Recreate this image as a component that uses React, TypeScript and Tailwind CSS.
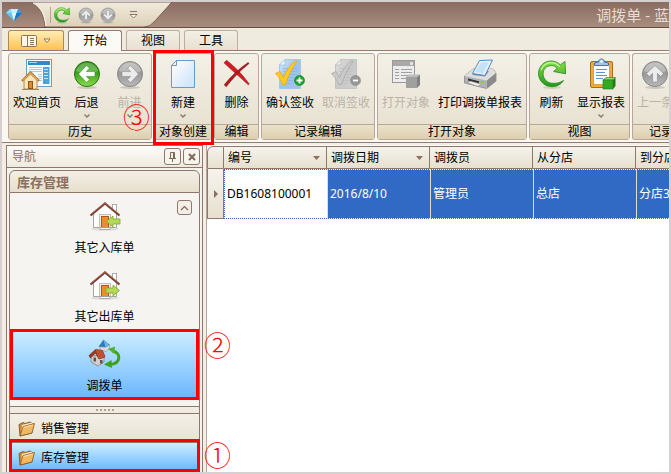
import { useState, type ReactNode } from "react";
import clsx from "clsx";

function Gem() {
  return (
    <svg width="16" height="12" viewBox="0 0 16 12">
      <path d="M4 0h8l4 4-8 8-8-8z" fill="#2f9be8" />
      <path d="M4 0h8l-1.500 4h-5z" fill="#c9efff" />
      <path d="M0 4h5.500L8 12z" fill="#62c4f5" />
      <path d="M5.500 4h5L8 12z" fill="#e4f8ff" />
      <path d="M10.500 4H16l-8 8z" fill="#1678c8" />
      <path d="M4 0l1.500 4H0z" fill="#8bdcfb" />
    </svg>
  );
}

function Refresh({ size = 32 }: { size?: number }) {
  return (
    <svg width={size} height={size} viewBox="0 0 32 32">
      <defs>
        <linearGradient id="refreshFill" x1="0" y1="0" x2="0" y2="1">
          <stop offset="0" stopColor="#8be04a" />
          <stop offset="1" stopColor="#1f9a17" />
        </linearGradient>
      </defs>
      <ellipse cx="16" cy="29.500" rx="9" ry="1.500" fill="#00000020" />
      <path
        d="M27.500 22.500C25 26.800 20 29.200 14.500 28.600 7.500 27.800 2.500 22 2.500 15.500 2.500 8.500 8 3 15 3c3.800 0 7 1.400 9.300 3.900L29 3.500l.6 12.300-12-2.300 3.600-3.200C19.500 8.300 17.500 7.500 15 7.600c-4.600.1-7.900 3.600-7.900 8 0 5.500 4 9.300 8.900 9.700 4.500.3 8-.6 11.500-2.800z"
        fill="url(#refreshFill)"
        stroke="#1f8a19"
        strokeWidth=".8"
      />
      <path d="M5 12C7 7 11 4.600 15.500 4.700c3.500.1 6 1.500 8.300 4" fill="none" stroke="#c7f59c" strokeWidth="1.200" />
    </svg>
  );
}

function RoundArrow({ dir, tone, size = 32 }: { dir: "left" | "right" | "up" | "down"; tone: "green" | "gray"; size?: number }) {
  const angle = { left: 0, up: 90, right: 180, down: 270 }[dir];
  const green = tone === "green";
  const id = `round-${tone}`;
  return (
    <svg width={size} height={size} viewBox="0 0 32 32">
      <defs>
        <linearGradient id={id} x1="0" y1="0" x2="0" y2="1">
          <stop offset="0" stopColor={green ? "#2f8f16" : "#b4b4b4"} />
          <stop offset="0.5" stopColor={green ? "#3fa51e" : "#9a9a9a"} />
          <stop offset="1" stopColor={green ? "#8ede4c" : "#b9b9b9"} />
        </linearGradient>
      </defs>
      <ellipse cx="16" cy="29.500" rx="10" ry="1.500" fill="#00000025" />
      <circle cx="16" cy="16" r="12.500" fill={`url(#${id})`} stroke={green ? "#25750f" : "#878787"} />
      <path d="M5 13a11.500 11.500 0 0 1 22 0c-6 3-16 3-22 0z" fill="#ffffff" opacity=".25" />
      <g transform={`rotate(${angle} 16 16)`}>
        <path d="M7.500 16l8-8.500 3 2.800-3.200 3.300H24v4.800h-8.700l3.200 3.300-3 2.800z" fill={green ? "#fff" : "#ececec"} stroke={green ? "#3a8f20" : "#8b8b8b"} strokeWidth=".6" />
      </g>
    </svg>
  );
}

function WelcomeIcon() {
  return (
    <svg width="32" height="32" viewBox="0 0 32 32">
      <rect x="5.500" y="1.500" width="25" height="27" fill="#f6fbff" stroke="#6b9fc4" />
      <rect x="7" y="3" width="22" height="4" fill="#2a8cc8" />
      <rect x="8" y="4" width="8" height="1" fill="#9fd5f2" />
      <path d="M8 9.500h13M8 11.500h13M8 13.500h13M17 16.500h4M17 18.500h4M17 20.500h4M17 22.500h4" stroke="#a8cce4" />
      <rect x="22" y="9" width="6.500" height="17" fill="#4ba3d8" />
      <path d="M23 11.500h4M23 14.500h4M23 17.500h4M23 20.500h4" stroke="#c6e5f7" />
      <path d="M3 22v9h13v-9l-6.500-6z" fill="#fbe6b8" stroke="#a8732e" strokeWidth=".8" />
      <path d="M1 23l8.500-8.500L18 23" fill="none" stroke="#b07a38" strokeWidth="2.400" />
      <path d="M2 22.300l7.500-7.300 7.500 7.300" fill="none" stroke="#f3c67c" />
      <rect x="7.500" y="23.500" width="4" height="7" fill="#d88c35" stroke="#8f5720" />
      <path d="M1 31.500h17" stroke="#9c8468" />
    </svg>
  );
}

function NewIcon() {
  return (
    <svg width="32" height="32" viewBox="0 0 32 32">
      <defs>
        <linearGradient id="paper" x1="0" y1="0" x2="1" y2="1">
          <stop offset="0" stopColor="#ffffff" />
          <stop offset="1" stopColor="#c9e2fa" />
        </linearGradient>
      </defs>
      <path d="M9.500 2.500h18v27h-23v-22z" fill="url(#paper)" stroke="#6b9bcb" />
      <path d="M9.500 2.500v5h-5z" fill="#e9f4ff" stroke="#6b9bcb" />
    </svg>
  );
}

function DeleteIcon() {
  return (
    <svg width="32" height="32" viewBox="0 0 32 32">
      <path d="M3 4.800L5.500 2.300C13 8 20.500 15.500 28.300 26l-1 .8C20 20 11 12.500 3 4.800z" fill="#d31c22" stroke="#9b1a1e" strokeWidth=".6" />
      <path d="M28 5.500l-.8-1C19 10 10.500 17.500 3.200 26.800l2 1.900C11.500 20.500 19 12.800 28 5.500z" fill="#b3181d" stroke="#8d1015" strokeWidth=".6" />
    </svg>
  );
}

function SignIcon({ off = false }: { off?: boolean }) {
  const id = off ? "sheetOff" : "sheetOn";
  return (
    <svg width="32" height="32" viewBox="0 0 32 32">
      <defs>
        <linearGradient id={id} x1="0" y1="0" x2="1" y2="1">
          <stop offset="0" stopColor={off ? "#dedede" : "#cfe9f8"} />
          <stop offset="0.5" stopColor={off ? "#c9c9c9" : "#9cc4ea"} />
          <stop offset="1" stopColor={off ? "#cecece" : "#a9bdf2"} />
        </linearGradient>
      </defs>
      <path d="M11 1.500h15.500v29h-21V7z" fill={`url(#${id})`} stroke={off ? "#bcbcbc" : "#9cc3ea"} strokeWidth=".8" />
      <path d="M11 1.500V7H5.500z" fill={off ? "#ececec" : "#eef9ff"} stroke={off ? "#b0b0b0" : "#86b3dc"} strokeWidth=".6" />
      <path d="M9 10.500h14M9 13.500h14M9 16.500h14M9 19.500h11M9 22.500h10M9 25.500h9" stroke={off ? "#bebebe" : "#8ab4e0"} strokeWidth=".7" />
      <path
        d="M1.500 15.500l4.500-2 3.500 6.500C12 12.500 16 7 21.500 2.500l1.500.8C18 10.500 14.500 17 11.500 26.500H8.500C7 22 4.500 18.500 1.500 15.500z"
        fill={off ? "#cacaca" : "#ffcb22"}
        stroke={off ? "#a9a9a9" : "#e8a51a"}
        strokeWidth=".8"
      />
      <circle cx="25.500" cy="22.500" r="5" fill={off ? "#989898" : "#19a52b"} stroke={off ? "#858585" : "#0d7a1b"} strokeWidth=".6" />
      <path d={off ? "M23 22.500h5" : "M22.500 22.500h6M25.500 19.500v6"} stroke="#fff" strokeWidth="1.800" />
    </svg>
  );
}

function OpenObjectIcon() {
  return (
    <svg width="32" height="32" viewBox="0 0 32 32">
      <rect x="2.500" y="2.500" width="22" height="22" fill="#ececec" stroke="#999" />
      <rect x="3" y="3" width="21" height="5" fill="#a9a9a9" />
      <rect x="20" y="4" width="3" height="3" fill="#e0e0e0" />
      <path d="M5 11.500h4M11 11.500h11M5 14.500h4M11 14.500h11M5 17.500h4M11 17.500h8M5 20.500h4M11 20.500h5" stroke="#a0a0a0" />
      <path d="M16 19l3-2.500h11L27 19z" fill="#bdbdbd" />
      <path d="M27 19l3-2.500V27l-3 3z" fill="#818181" />
      <rect x="16" y="19" width="11" height="11" fill="#a0a0a0" />
    </svg>
  );
}

function PrinterIcon() {
  return (
    <svg width="34" height="32" viewBox="0 0 34 32">
      <path d="M1.500 18L10 11h20l3 4v8l-9.500 7.500L1.500 25z" fill="#b2b2b2" stroke="#8a8a8a" strokeWidth=".8" />
      <path d="M1.500 18L10 11h20l3 4-9 7.500z" fill="#dedede" />
      <path d="M24 22.500l9-7.500v8l-9 7.500z" fill="#8b8b8b" />
      <path d="M9 17l5-4h12l-4 5.500z" fill="#8f8f8f" />
      <path d="M16.500 2.500L29.500 2 22 17.500l-12.500-2z" fill="#e6f3ff" stroke="#4b8ccc" />
      <path d="M18 4.500l8-.3L20 15.500 12 14z" fill="#c5e1f8" />
      <path d="M5 20.500l11 2.700v2L5 22.500z" fill="#333" />
      <path d="M4 24.500L14.500 28l4-1.500L8 23.500z" fill="#fafafa" stroke="#8a8a8a" strokeWidth=".5" />
      <rect x="18" y="23" width="3" height="2" fill="#7ed321" />
    </svg>
  );
}

function ReportIcon() {
  return (
    <svg width="32" height="32" viewBox="0 0 32 32">
      <rect x="5.500" y="3.500" width="22" height="26" rx="1.500" fill="#f2a93b" stroke="#a86d16" />
      <path d="M8.500 6.500h16v20h-16z" fill="#fafdff" stroke="#c98a2a" strokeWidth=".7" />
      <path d="M11 11.500h11M11 14.500h9M11 17.500h11M11 20.500h7" stroke="#5d93cf" />
      <path d="M9.500 7.500V5l4-1c0-4 6-4 6 0l4 1v2.500z" fill="#9cc6ee" stroke="#2d6cb0" strokeWidth=".9" />
      <circle cx="16.500" cy="3.500" r="1.200" fill="#fff" />
      <path d="M18 22l3-2.500h9.500L28 22z" fill="#8be36a" stroke="#1b7d14" strokeWidth=".6" />
      <path d="M28 22l2.500-2.500V28L28 31z" fill="#1c7f15" />
      <rect x="18" y="22" width="10" height="9" fill="#35a825" stroke="#1b7d14" strokeWidth=".6" />
    </svg>
  );
}

function HouseIcon({ out = false }: { out?: boolean }) {
  return (
    <svg width="32" height="30" viewBox="0 0 32 30">
      <ellipse cx="16" cy="28" rx="14" ry="1.800" fill="#00000018" />
      <rect x="23.500" y="3.500" width="4" height="9" fill="#fff" stroke="#a9a9a9" />
      <path d="M4.500 12v14.500h23V12L16 3z" fill="#fdfdfd" stroke="#a5a5a5" />
      <path d="M1.500 14.500L16 2.500l14.500 12" fill="none" stroke="#7a3c30" strokeWidth="2.200" />
      <path d="M2 13L16 1.800 30 13" fill="none" stroke="#b8745f" strokeWidth=".8" />
      <rect x="10.500" y="13.500" width="11" height="13" fill="#eee" stroke="#c0c0c0" />
      <rect x="12.500" y="15.500" width="7" height="11" fill="#ee8b2d" stroke="#b4531b" />
      <path d="M11 26.500h10v2H11z" fill="#fff" stroke="#999" strokeWidth=".8" />
      {out ? (
        <path d="M17 18h7v-3l6.500 5.500L24 26v-3h-7z" fill="#b5d957" stroke="#7da428" strokeWidth=".8" />
      ) : (
        <path d="M31 18h-7v-3l-6.500 5.500L24 26v-3h7z" fill="#b5d957" stroke="#7da428" strokeWidth=".8" />
      )}
    </svg>
  );
}

function TransferIcon() {
  return (
    <svg width="34" height="30" viewBox="0 0 34 30">
      <path d="M12 6.500V11l6 1.500 3.500-3V5z" fill="#d5dade" stroke="#8b949b" strokeWidth=".6" />
      <path d="M11 7.500L15.500 1l5.500 5-3.500 2z" fill="#2c7cc4" stroke="#3f6f9c" strokeWidth=".6" />
      <path d="M15.500 1L21 6l-3.500 2z" fill="#66b8ef" />
      <path d="M3 17v6l7 4 6-4v-7z" fill="#d2cfcd" stroke="#7b7672" strokeWidth=".7" />
      <path d="M1 16.500l6.500-6 7 1 2.500 6.500-6 2-3.500-6-5 5z" fill="#9c3a22" stroke="#6b2a1a" strokeWidth=".7" />
      <path d="M7.500 10.500l7 1L17 18l-6 2z" fill="#c04f30" />
      <path d="M5.500 18.500h2.500v4H5.500zM12 21h2.500v3.500H12z" fill="#5a5452" />
      <path d="M24.500 12c9 1.500 8.500 12.500-2 13.500" fill="none" stroke="#3da31f" strokeWidth="3" />
      <path d="M20 10l7-2.500-.5 7.500z" fill="#4ab52b" />
      <path d="M16 25.500l7.500-4.500.5 8z" fill="#3da31f" />
    </svg>
  );
}

function FolderIcon() {
  return (
    <svg width="17" height="16" viewBox="0 0 17 16">
      <path d="M1 3.500l4-2 2 1 5-1.500 2 1V12L2 15z" fill="#c98a3a" stroke="#7b4a20" strokeWidth=".8" />
      <path d="M4 4l10-2.500-.5 9L3 14z" fill="#fff3d6" />
      <path d="M2 15L5 5.500 16.500 2.500 14 12z" fill="#f0b961" stroke="#8a5522" strokeWidth=".8" />
      <path d="M5.500 6.500l9.500-2.500" stroke="#ffe2ab" />
    </svg>
  );
}

function Chevron() {
  return (
    <svg width="6" height="4" viewBox="0 0 6 4">
      <path d="M.5.5L3 3 5.500.5" fill="none" stroke="#8b7565" strokeWidth="1.300" />
    </svg>
  );
}

type Action = { label: string; icon: ReactNode; disabled?: boolean; menu?: boolean };
type Group = { title: string; actions: Action[]; mark?: string; last?: boolean };

const GROUPS: Group[] = [
  {
    title: "历史",
    actions: [
      { label: "欢迎首页", icon: <WelcomeIcon /> },
      { label: "后退", icon: <RoundArrow dir="left" tone="green" />, menu: true },
      { label: "前进", icon: <RoundArrow dir="right" tone="gray" />, menu: true, disabled: true },
    ],
  },
  { title: "对象创建", mark: "③", actions: [{ label: "新建", icon: <NewIcon />, menu: true }] },
  { title: "编辑", actions: [{ label: "删除", icon: <DeleteIcon /> }] },
  {
    title: "记录编辑",
    actions: [
      { label: "确认签收", icon: <SignIcon /> },
      { label: "取消签收", icon: <SignIcon off />, disabled: true },
    ],
  },
  {
    title: "打开对象",
    actions: [
      { label: "打开对象", icon: <OpenObjectIcon />, disabled: true },
      { label: "打印调拨单报表", icon: <PrinterIcon /> },
    ],
  },
  {
    title: "视图",
    actions: [
      { label: "刷新", icon: <Refresh /> },
      { label: "显示报表", icon: <ReportIcon />, menu: true },
    ],
  },
  {
    title: "记录",
    last: true,
    actions: [{ label: "上一条", icon: <RoundArrow dir="up" tone="gray" />, disabled: true }],
  },
];

const TABS = ["开始", "视图", "工具"];

const NAV_ITEMS = [
  { label: "其它入库单", icon: <HouseIcon /> },
  { label: "其它出库单", icon: <HouseIcon out /> },
  { label: "调拨单", icon: <TransferIcon />, mark: "②" },
];

const SECTIONS = [
  { label: "销售管理" },
  { label: "库存管理", mark: "①" },
];

const COLUMNS = [
  { label: "编号", value: "DB1608100001", filter: true },
  { label: "调拨日期", value: "2016/8/10", filter: true },
  { label: "调拨员", value: "管理员" },
  { label: "从分店", value: "总店" },
  { label: "到分店", value: "分店3" },
];

function Mark({ className, children }: { className: string; children: ReactNode }) {
  return (
    <span className={clsx("pointer-events-none absolute z-20 font-['DejaVu_Sans','Noto_Sans_CJK_SC',sans-serif] text-[27px] leading-6 font-extralight text-[#f00]", className)}>
      {children}
    </span>
  );
}

function TitleBar() {
  return (
    <header className="relative flex h-[26px] shrink-0 items-center overflow-hidden border-b border-[#6a4c40] bg-linear-to-b from-[#8a6c61] to-[#a88d7e]">
      <svg className="absolute top-0 left-0" width="180" height="25" viewBox="0 0 180 25">
        <defs>
          <linearGradient id="quick" x1="0" y1="0" x2="0" y2="1">
            <stop offset="0" stopColor="#f1ebdd" />
            <stop offset="1" stopColor="#ddd0b8" />
          </linearGradient>
        </defs>
        <path d="M29 0h141l-18 20q-4 5-10 5H43C42 13 38 4 29 0z" fill="url(#quick)" stroke="#7b6053" />
        <path d="M31 1c8 4 12 12 13 23" fill="none" stroke="#fffaf0" />
      </svg>
      <div className="relative flex items-center">
        <span className="mr-7 ml-1"><Gem /></span>
        <span className="mr-0.5 h-4 w-px bg-[#b7a493]" />
        <button aria-label="刷新" className="mr-1.5"><Refresh size={18} /></button>
        <button aria-label="上移" className="mr-1"><RoundArrow dir="up" tone="gray" size={18} /></button>
        <button aria-label="下移" className="mr-3"><RoundArrow dir="down" tone="gray" size={18} /></button>
        <button aria-label="自定义">
          <svg width="9" height="8" viewBox="0 0 9 8">
            <path d="M1 .5h7" stroke="#8b7565" />
            <path d="M1 3.500h7l-3.500 3.500z" fill="#fff" stroke="#8b7565" />
          </svg>
        </button>
      </div>
      <h1 className="ml-auto text-[15px] leading-5 whitespace-nowrap text-[#e6dcd2]">调拨单 - 蓝</h1>
    </header>
  );
}

function RibbonGroup({ group }: { group: Group }) {
  return (
    <section
      className={clsx(
        "relative flex flex-col rounded-[3px] border border-[#b9a698] bg-linear-to-b from-[#f3f0e7] to-[#e6dfcd]",
        group.last ? "min-w-9 flex-1 overflow-hidden rounded-r-none border-r-0" : "shrink-0",
      )}
    >
      <div className={clsx("flex h-[70px]", !group.last && "justify-center")}>
        {group.actions.map((a) => (
          <button
            key={a.label}
            disabled={a.disabled}
            className={clsx(
              "flex min-w-[43px] shrink-0 flex-col items-center px-1 pt-1 whitespace-nowrap",
              a.disabled ? "text-[#b9b2a8]" : "text-black",
            )}
          >
            {a.icon}
            <span className="mt-1 leading-[18px]">{a.label}</span>
            {a.menu && <span className="mt-0.5"><Chevron /></span>}
          </button>
        ))}
      </div>
      <h2
        className={clsx(
          "h-[15px] border-t border-[#b9a698] bg-linear-to-b from-[#ebe2cc] to-[#ddcfae] px-1 leading-[14px] whitespace-nowrap",
          group.last ? "pl-4" : "text-center",
        )}
      >
        {group.title}
      </h2>
      {group.mark && (
        <>
          <span className="pointer-events-none absolute -top-1 -right-[3px] -bottom-1.5 -left-0.5 z-10 border-3 border-[#f00]" />
          <Mark className="top-[53px] -left-8">{group.mark}</Mark>
        </>
      )}
    </section>
  );
}

function Ribbon() {
  const [tab, setTab] = useState("开始");
  return (
    <>
      <div className="flex h-[23px] shrink-0 items-end gap-1 border-b border-[#937d70] bg-[#efebdf] px-1.5" role="tablist">
        <button
          aria-label="文件"
          className="flex h-5 w-14 items-center justify-center gap-1.5 rounded-t-[3px] border border-b-0 border-[#a98b58] bg-linear-to-b from-[#ffedb4] to-[#ffc14d]"
        >
          <svg width="16" height="12" viewBox="0 0 16 12">
            <rect x=".5" y=".5" width="15" height="11" rx="1" fill="#fff8e2" stroke="#8d7357" />
            <path d="M6.500 0v12M9 3.500h4M9 5.500h4M9 7.500h4M9 9.500h4" stroke="#8d7357" />
          </svg>
          <svg width="8" height="6" viewBox="0 0 8 6">
            <path d="M1 1h6L4 4.500z" fill="#fff" stroke="#8d7357" />
          </svg>
        </button>
        {TABS.map((t) => (
          <button
            key={t}
            role="tab"
            aria-selected={tab === t}
            onClick={() => setTab(t)}
            className={clsx(
              "rounded-t-[3px] border border-b-0 px-[14px] leading-5",
              tab === t
                ? "relative -mb-px h-[21px] border-[#937d70] bg-[#fbfaf6]"
                : "h-5 border-[#bfae9f] bg-linear-to-b from-[#f3efe5] to-[#e8e1d1]",
            )}
          >
            {t}
          </button>
        ))}
      </div>
      <div className="flex shrink-0 gap-0.5 border-b border-[#937d70] bg-[#faf8f2] py-0.5 pl-1.5">
        {GROUPS.map((g) => (
          <RibbonGroup key={g.title} group={g} />
        ))}
      </div>
    </>
  );
}

function NavPanel() {
  const [item, setItem] = useState("调拨单");
  const [section, setSection] = useState("库存管理");
  const square = "flex size-[17px] items-center justify-center rounded-[3px] border border-[#8f7869] bg-[#f7f4ec]";
  return (
    <aside className="flex w-[197px] shrink-0 flex-col border border-b-0 border-[#8f7869] bg-[#f5f3ef]">
      <div className="flex h-[22px] shrink-0 items-center gap-0.5 border-b border-[#8f7869] bg-linear-to-b from-[#fdfcf9] to-[#eeeade] pr-0.5 pl-[5px]">
        <span className="mr-auto text-[#8b6f5f]">导航</span>
        <button aria-label="固定" className={square}>
          <svg width="9" height="10" viewBox="0 0 9 10">
            <path d="M2.500 6V.5h4V6M1 6.500h7M4.500 7v3M5.500 1v5" fill="none" stroke="#7f6759" />
          </svg>
        </button>
        <button aria-label="关闭" className={square}>
          <svg width="8" height="8" viewBox="0 0 8 8">
            <path d="M1 1l6 6M7 1L1 7" stroke="#7f6759" strokeWidth="2" />
          </svg>
        </button>
      </div>

      <div className="flex min-h-0 flex-1 flex-col px-0.5 pt-0.5">
        <h2 className="h-[23px] shrink-0 rounded-t-md border border-[#8f7869] bg-linear-to-b from-[#f3efe4] to-[#e6dfcc] px-[7px] text-[13px] leading-[22px] font-bold text-[#8b6f5f]">
          库存管理
        </h2>
        <div className="relative flex min-h-0 flex-1 flex-col border-x border-[#8f7869] bg-[#f6f4f0]">
          {NAV_ITEMS.map((n) => (
            <button
              key={n.label}
              onClick={() => setItem(n.label)}
              className={clsx(
                "relative flex h-[69px] shrink-0 flex-col items-center pt-2",
                item === n.label && "bg-linear-to-b from-[#cdeeff] to-[#66b5fd]",
              )}
            >
              {n.icon}
              <span className="mt-2 leading-[18px]">{n.label}</span>
              {n.mark && (
                <>
                  <span className="pointer-events-none absolute inset-x-0 -top-0.5 bottom-0 border-3 border-[#f00]" />
                  <Mark className="top-1 -right-8">{n.mark}</Mark>
                </>
              )}
            </button>
          ))}
          <button aria-label="向上滚动" className="absolute top-[7px] right-[7px] flex size-[15px] items-center justify-center rounded-[3px] border border-[#8f7869] bg-[#f3efe6]">
            <svg width="9" height="6" viewBox="0 0 9 6">
              <path d="M1 5l3.500-3.500L8 5" fill="none" stroke="#7f6759" strokeWidth="1.200" />
            </svg>
          </button>
        </div>

        <div className="flex h-2 shrink-0 items-center justify-center gap-0.5 border border-[#8f7869] bg-[#f0ece1]">
          {[0, 1, 2, 3, 4].map((i) => (
            <span key={i} className="size-0.5 bg-[#b3a294]" />
          ))}
        </div>
        {SECTIONS.map((s) => (
          <button
            key={s.label}
            onClick={() => setSection(s.label)}
            className={clsx(
              "relative flex h-[29px] shrink-0 items-center gap-1.5 border-x border-b border-[#8f7869] pt-0.5 pl-2",
              section === s.label
                ? "bg-linear-to-b from-[#cdf0ff] to-[#66b5fd]"
                : "bg-linear-to-b from-[#f3f0e7] to-[#e8e2d2]",
            )}
          >
            <FolderIcon />
            <span>{s.label}</span>
            {s.mark && (
              <>
                <span className="pointer-events-none absolute -inset-x-px -top-1 -bottom-px border-3 border-[#f00]" />
                <Mark className="top-0.5 -right-8">{s.mark}</Mark>
              </>
            )}
          </button>
        ))}
      </div>
    </aside>
  );
}

function Grid() {
  const head = "h-[23px] border-y border-r border-[#8f7869] bg-linear-to-b from-[#f6f3ec] to-[#e7e0cf] p-0 font-normal";
  return (
    <div className="min-w-0 flex-1 overflow-hidden pt-px">
      <table className="w-[532px] table-fixed border-separate border-spacing-0 text-left whitespace-nowrap">
        <colgroup>
          <col className="w-[17px]" />
          {COLUMNS.map((c) => <col key={c.label} className="w-[103px]" />)}
        </colgroup>
        <thead>
          <tr>
            <th className={clsx(head, "rounded-tl-md border-l")} />
            {COLUMNS.map((c) => (
              <th key={c.label} className={head}>
                <span className="flex items-center justify-between pr-1.5 pl-1">
                  {c.label}
                  {c.filter && (
                    <svg width="7" height="4" viewBox="0 0 7 4">
                      <path d="M0 0h7L3.500 4z" fill="#8b6f5f" />
                    </svg>
                  )}
                </span>
              </th>
            ))}
          </tr>
        </thead>
        <tbody>
          <tr>
            <td className="h-[50px] border-x border-b border-[#8f7869] bg-linear-to-b from-[#f6f3ec] to-[#e7e0cf] p-0">
              <svg className="ml-[6px]" width="4" height="8" viewBox="0 0 4 8">
                <path d="M0 0l4 4-4 4z" fill="#8b6f5f" />
              </svg>
            </td>
            {COLUMNS.map((c, i) => (
              <td
                key={c.label}
                className={clsx(
                  "border-y border-dotted py-0 pr-0 pl-0.5",
                  i === 0
                    ? "border-l border-[#316ac5] bg-white text-black"
                    : "border-l border-y-white border-l-[#e4dccb] bg-[#316ac5] text-white [border-left-style:solid]",
                )}
              >
                {c.value}
              </td>
            ))}
          </tr>
        </tbody>
      </table>
    </div>
  );
}

export default function App() {
  return (
    <div className="h-screen bg-[#d7d0d1] p-0.5 font-['Noto_Sans','Noto_Sans_CJK_SC',sans-serif] text-[12px] leading-4 text-black">
      <div className="flex h-full flex-col overflow-hidden bg-white">
        <TitleBar />
        <Ribbon />
        <main className="flex min-h-0 flex-1 bg-[#f3ede4] pt-0.5 pl-1">
          <NavPanel />
          <div className="ml-[3px] flex min-w-0 flex-1 border-l border-[#b9a698] bg-white">
            <Grid />
          </div>
        </main>
      </div>
    </div>
  );
}
